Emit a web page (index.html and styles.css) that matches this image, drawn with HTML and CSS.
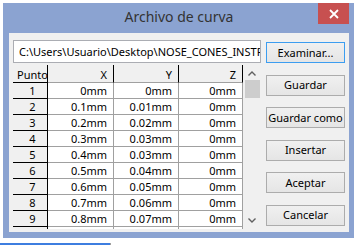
FILE: index.html
```html
<!DOCTYPE html>
<html>
<head>
<meta charset="utf-8">
<link rel="stylesheet" href="styles.css">
</head>
<body>
<div class="window">
  <div class="titlebar">
    <span class="spacer"></span>
    <span class="title">Archivo de curva</span>
    <span class="close"><svg width="10" height="10" viewBox="0 0 10 10"><path d="M1 1L9 9M9 1L1 9" stroke="#fff" stroke-width="1.8"/></svg></span>
  </div>
  <div class="client">
    <div class="left">
      <div class="edit">C:\Users\Usuario\Desktop\NOSE_CONES_INSTRUMENTOS\curva.txt</div>
      <div class="gridwrap">
        <div class="grid">
          <div class="hd rh">Punto</div><div class="hd">X</div><div class="hd">Y</div><div class="hd">Z</div>
          <div class="rh">1</div><div class="c">0mm</div><div class="c">0mm</div><div class="c">0mm</div>
          <div class="rh">2</div><div class="c">0.1mm</div><div class="c">0.01mm</div><div class="c">0mm</div>
          <div class="rh">3</div><div class="c">0.2mm</div><div class="c">0.02mm</div><div class="c">0mm</div>
          <div class="rh">4</div><div class="c">0.3mm</div><div class="c">0.03mm</div><div class="c">0mm</div>
          <div class="rh">5</div><div class="c">0.4mm</div><div class="c">0.03mm</div><div class="c">0mm</div>
          <div class="rh">6</div><div class="c">0.5mm</div><div class="c">0.04mm</div><div class="c">0mm</div>
          <div class="rh">7</div><div class="c">0.6mm</div><div class="c">0.05mm</div><div class="c">0mm</div>
          <div class="rh">8</div><div class="c">0.7mm</div><div class="c">0.06mm</div><div class="c">0mm</div>
          <div class="rh">9</div><div class="c">0.8mm</div><div class="c">0.07mm</div><div class="c">0mm</div>
          <div class="rh"></div><div class="c"></div><div class="c"></div><div class="c"></div>
        </div>
        <div class="scroll">
          <svg class="arrow" width="8" height="5" viewBox="0 0 8 5"><path d="M0.5 4.5L4 1L7.5 4.5" fill="none" stroke="#606060" stroke-width="1.4"/></svg>
          <div class="thumb"></div>
          <div class="track"></div>
          <svg class="arrow" width="8" height="5" viewBox="0 0 8 5"><path d="M0.5 0.5L4 4L7.5 0.5" fill="none" stroke="#606060" stroke-width="1.4"/></svg>
        </div>
      </div>
    </div>
    <div class="right">
      <button class="btn default">Examinar...</button>
      <button class="btn">Guardar</button>
      <button class="btn">Guardar como</button>
      <button class="btn">Insertar</button>
      <button class="btn">Aceptar</button>
      <button class="btn">Cancelar</button>
    </div>
  </div>
</div>
<div class="below"></div>
</body>
</html>
```
FILE: styles.css
```css
html, body {
  margin: 0;
  padding: 0;
}
body {
  width: 358px;
  height: 249px;
  overflow: hidden;
  background: #ffffff;
  font-family: "Noto Sans", "Open Sans", sans-serif;
  font-size: 11px;
  color: #000;
}
.window {
  margin: 3px 0 0 3px;
  width: 351px;
  height: 235px;
  box-sizing: border-box;
  background: #8ba3d1;
  padding: 0 5px 6px 6px;
  display: flex;
  flex-direction: column;
}
.titlebar {
  height: 30px;
  display: grid;
  grid-template-columns: 1fr auto 1fr;
  align-items: start;
}
.title {
  font-size: 14px;
  color: #333;
  line-height: 28px;
}
.close {
  justify-self: end;
  width: 31px;
  height: 21px;
  background: #c75050;
  display: flex;
  align-items: center;
  justify-content: center;
}
.client {
  flex: 1;
  background: #f0f0f0;
  display: flex;
  gap: 5px;
  padding: 7px 0 0 4px;
  overflow: hidden;
}
.left {
  width: 248px;
  display: flex;
  flex-direction: column;
  gap: 2px;
}
.edit {
  height: 23px;
  box-sizing: border-box;
  border: 1px solid #abadb3;
  background: #fff;
  padding: 0 0 0 5px;
  line-height: 21px;
  white-space: nowrap;
  overflow: hidden;
}
.gridwrap {
  height: 164px;
  display: flex;
  overflow: hidden;
}
.grid {
  width: 230px;
  display: grid;
  grid-template-columns: 35px 66px 65px 64px;
  grid-auto-rows: 16px;
  grid-template-rows: 18px;
  align-content: start;
}
.grid > div {
  box-sizing: border-box;
  border-right: 1px solid #a0a0a0;
  border-bottom: 1px solid #a0a0a0;
  line-height: 15px;
  white-space: nowrap;
  overflow: hidden;
}
.grid > .c {
  background: #fff;
  text-align: right;
  padding-right: 6px;
}
.grid > .rh {
  background: #f0f0f0;
  border-right-color: #000;
  border-bottom-color: #000;
  text-align: center;
  padding-left: 5px;
}
.grid > .hd {
  background: #f0f0f0;
  border-right-color: #000;
  text-align: right;
  padding-right: 6px;
  line-height: 19px;
}
.grid > .hd.rh {
  text-align: left;
  padding-left: 4px;
  padding-right: 0;
}
.scroll {
  width: 18px;
  display: flex;
  flex-direction: column;
  align-items: center;
  padding-top: 6px;
}
.arrow {
  display: block;
  flex: none;
}
.thumb {
  margin-top: 4px;
  width: 15px;
  height: 18px;
  background: #cdcdcd;
  margin-left: 1px;
}
.track {
  flex: 1;
}
.scroll .arrow:last-child {
  margin-bottom: 6px;
}
.right {
  display: flex;
  flex-direction: column;
  padding-top: 2px;
  gap: 11.5px;
}
.btn {
  width: 79px;
  height: 21px;
  box-sizing: border-box;
  border: 1px solid #acacac;
  background: linear-gradient(#f0f0f0, #e5e5e5);
  font-family: inherit;
  font-size: 11px;
  color: #000;
  padding: 0;
  margin: 0;
  line-height: 18px;
  white-space: nowrap;
}
.btn.default {
  border-color: #3c9df0;
}
.below {
  margin-top: 5px;
  width: 110px;
  height: 2px;
  background: #3d7ee0;
  border-right: 1px solid #a0a0a0;
}
```
